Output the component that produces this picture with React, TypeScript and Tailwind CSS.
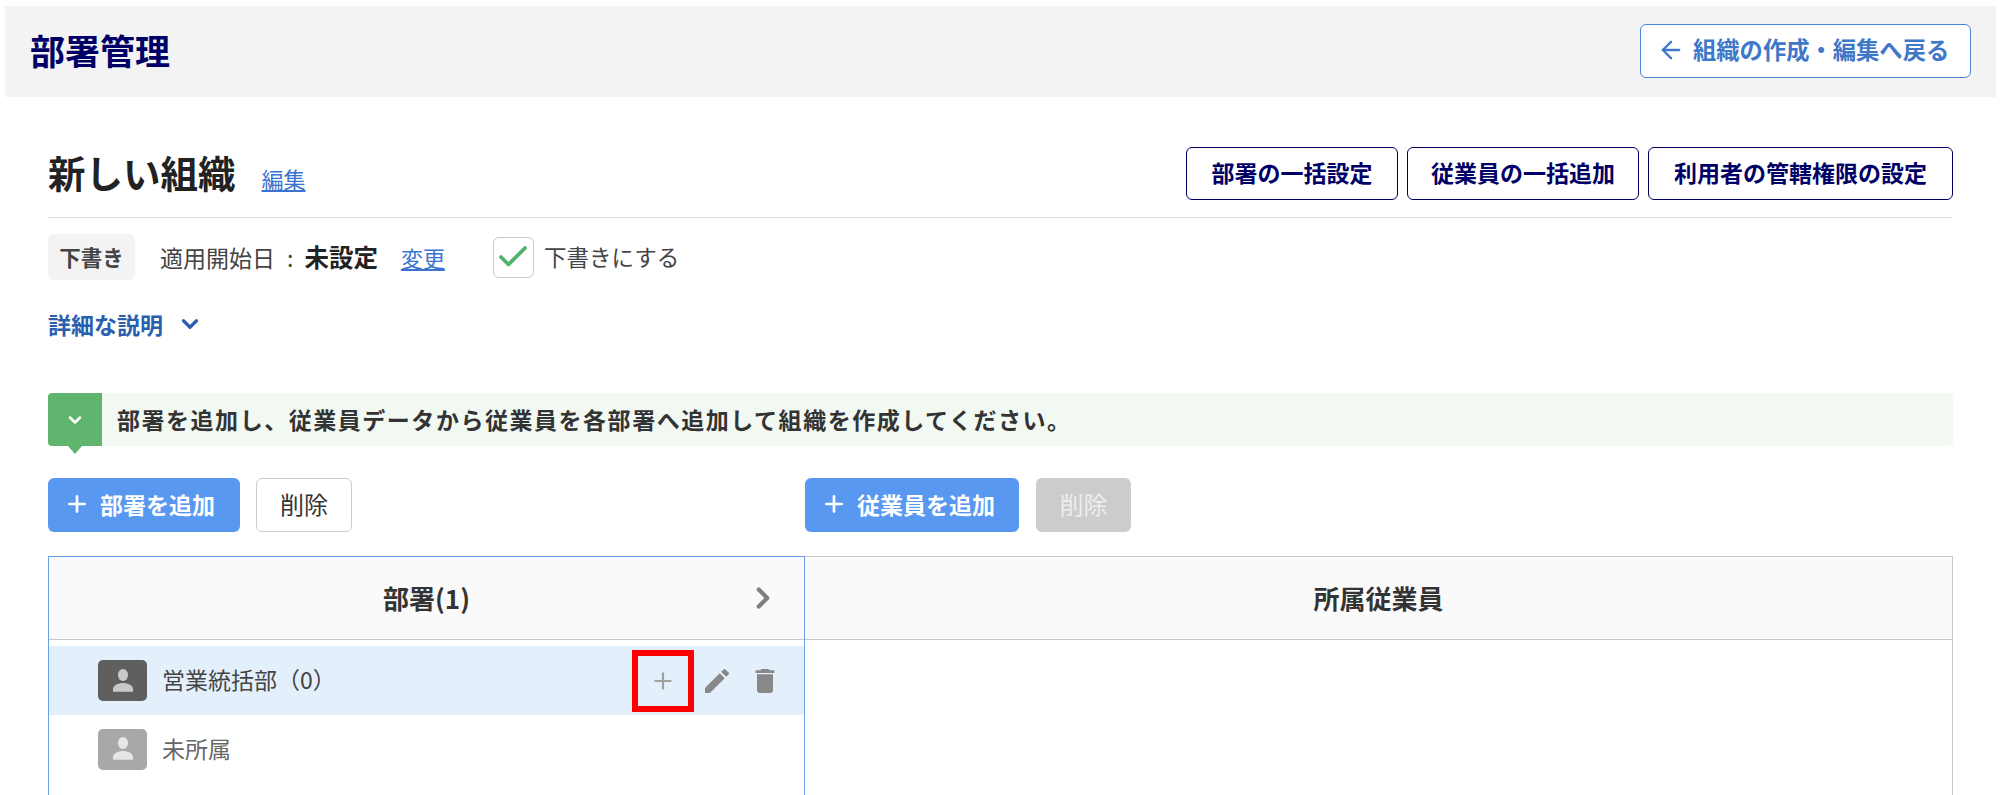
import { ArrowLeft, ChevronDown, ChevronRight, Plus, Check } from 'lucide-react';
import { MdEdit, MdDelete } from 'react-icons/md';

function PersonBadge({ dark }: { dark: boolean }) {
  return (
    <div className={dark ? 'w-[49px] h-[41px] rounded-[5px] bg-[#5f5f5f] flex items-center justify-center' : 'w-[49px] h-[41px] rounded-[5px] bg-[#a8a8a8] flex items-center justify-center'}>
      <svg width="32" height="32" viewBox="0 0 24 24" fill={dark ? '#c8c8c8' : '#e6e6e6'}>
        <ellipse cx="12" cy="7.500" rx="3.800" ry="4.500" />
        <path d="M4.500 20v-2c0-3 4.500-4.500 7.500-4.500s7.500 1.500 7.500 4.500v2z" />
      </svg>
    </div>
  );
}

function TopButton({ label, className }: { label: string; className: string }) {
  return (
    <button className={'h-[53px] pb-[2px] border border-[#000066] rounded-[6px] bg-white text-[#000066] font-bold text-[23px] ' + className}>
      {label}
    </button>
  );
}

function AddButton({ label, className }: { label: string; className: string }) {
  return (
    <button className={'h-[54px] pl-[16px] pb-[2px] rounded-[6px] bg-[#5898f0] text-white font-bold text-[23px] flex items-center gap-[10px] ' + className}>
      <Plus size={26} strokeWidth={2.5} />
      {label}
    </button>
  );
}

export default function App() {
  return (
    <div className="h-[795px] overflow-hidden bg-white text-[#333333] font-['Noto_Sans_CJK_JP','Noto_Sans',sans-serif] pt-[6px]">
      <header className="mx-[5px] mr-[4px] h-[91px] bg-[#f3f3f3] flex items-center justify-between pl-[25px] pr-[25px]">
        <h1 className="text-[35px] font-bold text-[#000066] mb-[2px]">部署管理</h1>
        <button className="w-[331px] h-[54px] mb-[2px] pl-[16px] pb-[2px] bg-white border border-[#4a86d8] rounded-[6px] text-[#3f78c8] font-bold text-[23.300px] flex items-center gap-[8px]">
          <ArrowLeft size={28} strokeWidth={2} />
          組織の作成・編集へ戻る
        </button>
      </header>

      <main className="px-[48px] mr-[-1px]">
        <div className="mt-[50px] h-[71px] pb-[18px] border-b border-[#e0e0e0] flex items-center justify-between">
          <div className="flex items-end gap-[26px]">
            <h2 className="text-[37.500px] leading-[54px] mb-[2px] font-bold text-[#222222]">新しい組織</h2>
            <a className="text-[22px] leading-[44px] mb-[1px] underline text-[#3a74d0]">編集</a>
          </div>
          <div className="flex gap-[9px]">
            <TopButton label="部署の一括設定" className="w-[212px]" />
            <TopButton label="従業員の一括追加" className="w-[232px]" />
            <TopButton label="利用者の管轄権限の設定" className="w-[305px]" />
          </div>
        </div>

        <div className="mt-[16px] flex items-center text-[23px] text-[#444444]">
          <span className="w-[87px] h-[46px] rounded-[6px] bg-[#f3f3f3] flex items-center justify-center font-bold text-[21.500px]">下書き</span>
          <span className="ml-[25px]">適用開始日</span>
          <span className="ml-[12px]">:</span>
          <span className="ml-[11px] font-bold text-[24.500px] text-[#222222]">未設定</span>
          <a className="ml-[23px] underline text-[#3a74d0] text-[22px]">変更</a>
          <span className="ml-[48px] w-[41px] h-[41px] border border-[#c8c8c8] rounded-[6px] flex items-center justify-center text-[#4fb46a]">
            <Check size={36} strokeWidth={2.5} />
          </span>
          <span className="ml-[10px] text-[22.500px]">下書きにする</span>
        </div>

        <div className="mt-[24px] flex items-center gap-[14px] text-[#2a5fb0] font-bold text-[23px] leading-[40px]">
          詳細な説明
          <ChevronDown size={26} strokeWidth={3} />
        </div>

        <div className="mt-[49px] h-[53px] bg-[#f2f8f2] rounded-[4px] flex items-center relative">
          <div className="w-[54px] h-[53px] bg-[#5fb56e] rounded-l-[4px] flex items-center justify-center text-white relative">
            <ChevronDown size={20} strokeWidth={3} />
            <div className="absolute left-[20px] top-[53px] border-x-[7px] border-x-transparent border-t-[8px] border-t-[#5fb56e]" />
          </div>
          <span className="ml-[15px] font-bold text-[23px] tracking-[1.530px] text-[#333333]">部署を追加し、従業員データから従業員を各部署へ追加して組織を作成してください。</span>
        </div>

        <div className="mt-[32px] flex">
          <AddButton label="部署を追加" className="w-[192px]" />
          <button className="ml-[16px] w-[96px] h-[54px] pb-[2px] border border-[#cccccc] rounded-[6px] bg-white text-[24px] text-[#333333]">削除</button>
          <AddButton label="従業員を追加" className="ml-[453px] w-[214px]" />
          <button className="ml-[17px] w-[95px] h-[54px] pb-[2px] rounded-[6px] bg-[#cccccc] text-[24px] text-[#eeeeee]">削除</button>
        </div>

        <div className="mt-[24px] flex h-[300px] relative">
          <div className="w-[757px] border border-[#6aa0e8] border-b-0">
            <div className="h-[83px] bg-[#fafafa] border-b border-[#c8c8c8] flex items-center justify-center relative font-bold text-[26px] text-[#333333]">
              <span className="mb-[2px]">部署(1)</span>
              <ChevronRight size={34} strokeWidth={3} className="absolute right-[24px] text-[#808080]" />
            </div>
            <div className="mt-[6px] h-[69px] bg-[#e4effc] flex items-center pl-[49px] pr-[23px] text-[23px] text-[#444444]">
              <PersonBadge dark />
              <span className="ml-[15px] mb-[2px]">営業統括部（0）</span>
              <div className="ml-auto flex items-center gap-[16px] text-[#888888]">
                <Plus size={26} strokeWidth={2} className="text-[#a0a0a0] mr-[9px]" />
                <MdEdit size={32} />
                <MdDelete size={32} />
              </div>
            </div>
            <div className="h-[68px] flex items-center pl-[49px] text-[23px] text-[#666666]">
              <PersonBadge dark={false} />
              <span className="ml-[15px] mb-[2px]">未所属</span>
            </div>
          </div>
          <div className="flex-1 border-t border-r border-[#c8c8c8]">
            <div className="h-[83px] pb-[2px] bg-[#fafafa] border-b border-[#c8c8c8] flex items-center justify-center font-bold text-[26px] text-[#333333]">
              所属従業員
            </div>
          </div>
          <div className="absolute left-[584px] top-[94px] w-[62px] h-[62px] border-[6px] border-[#ff0000]" />
        </div>
      </main>
    </div>
  );
}
